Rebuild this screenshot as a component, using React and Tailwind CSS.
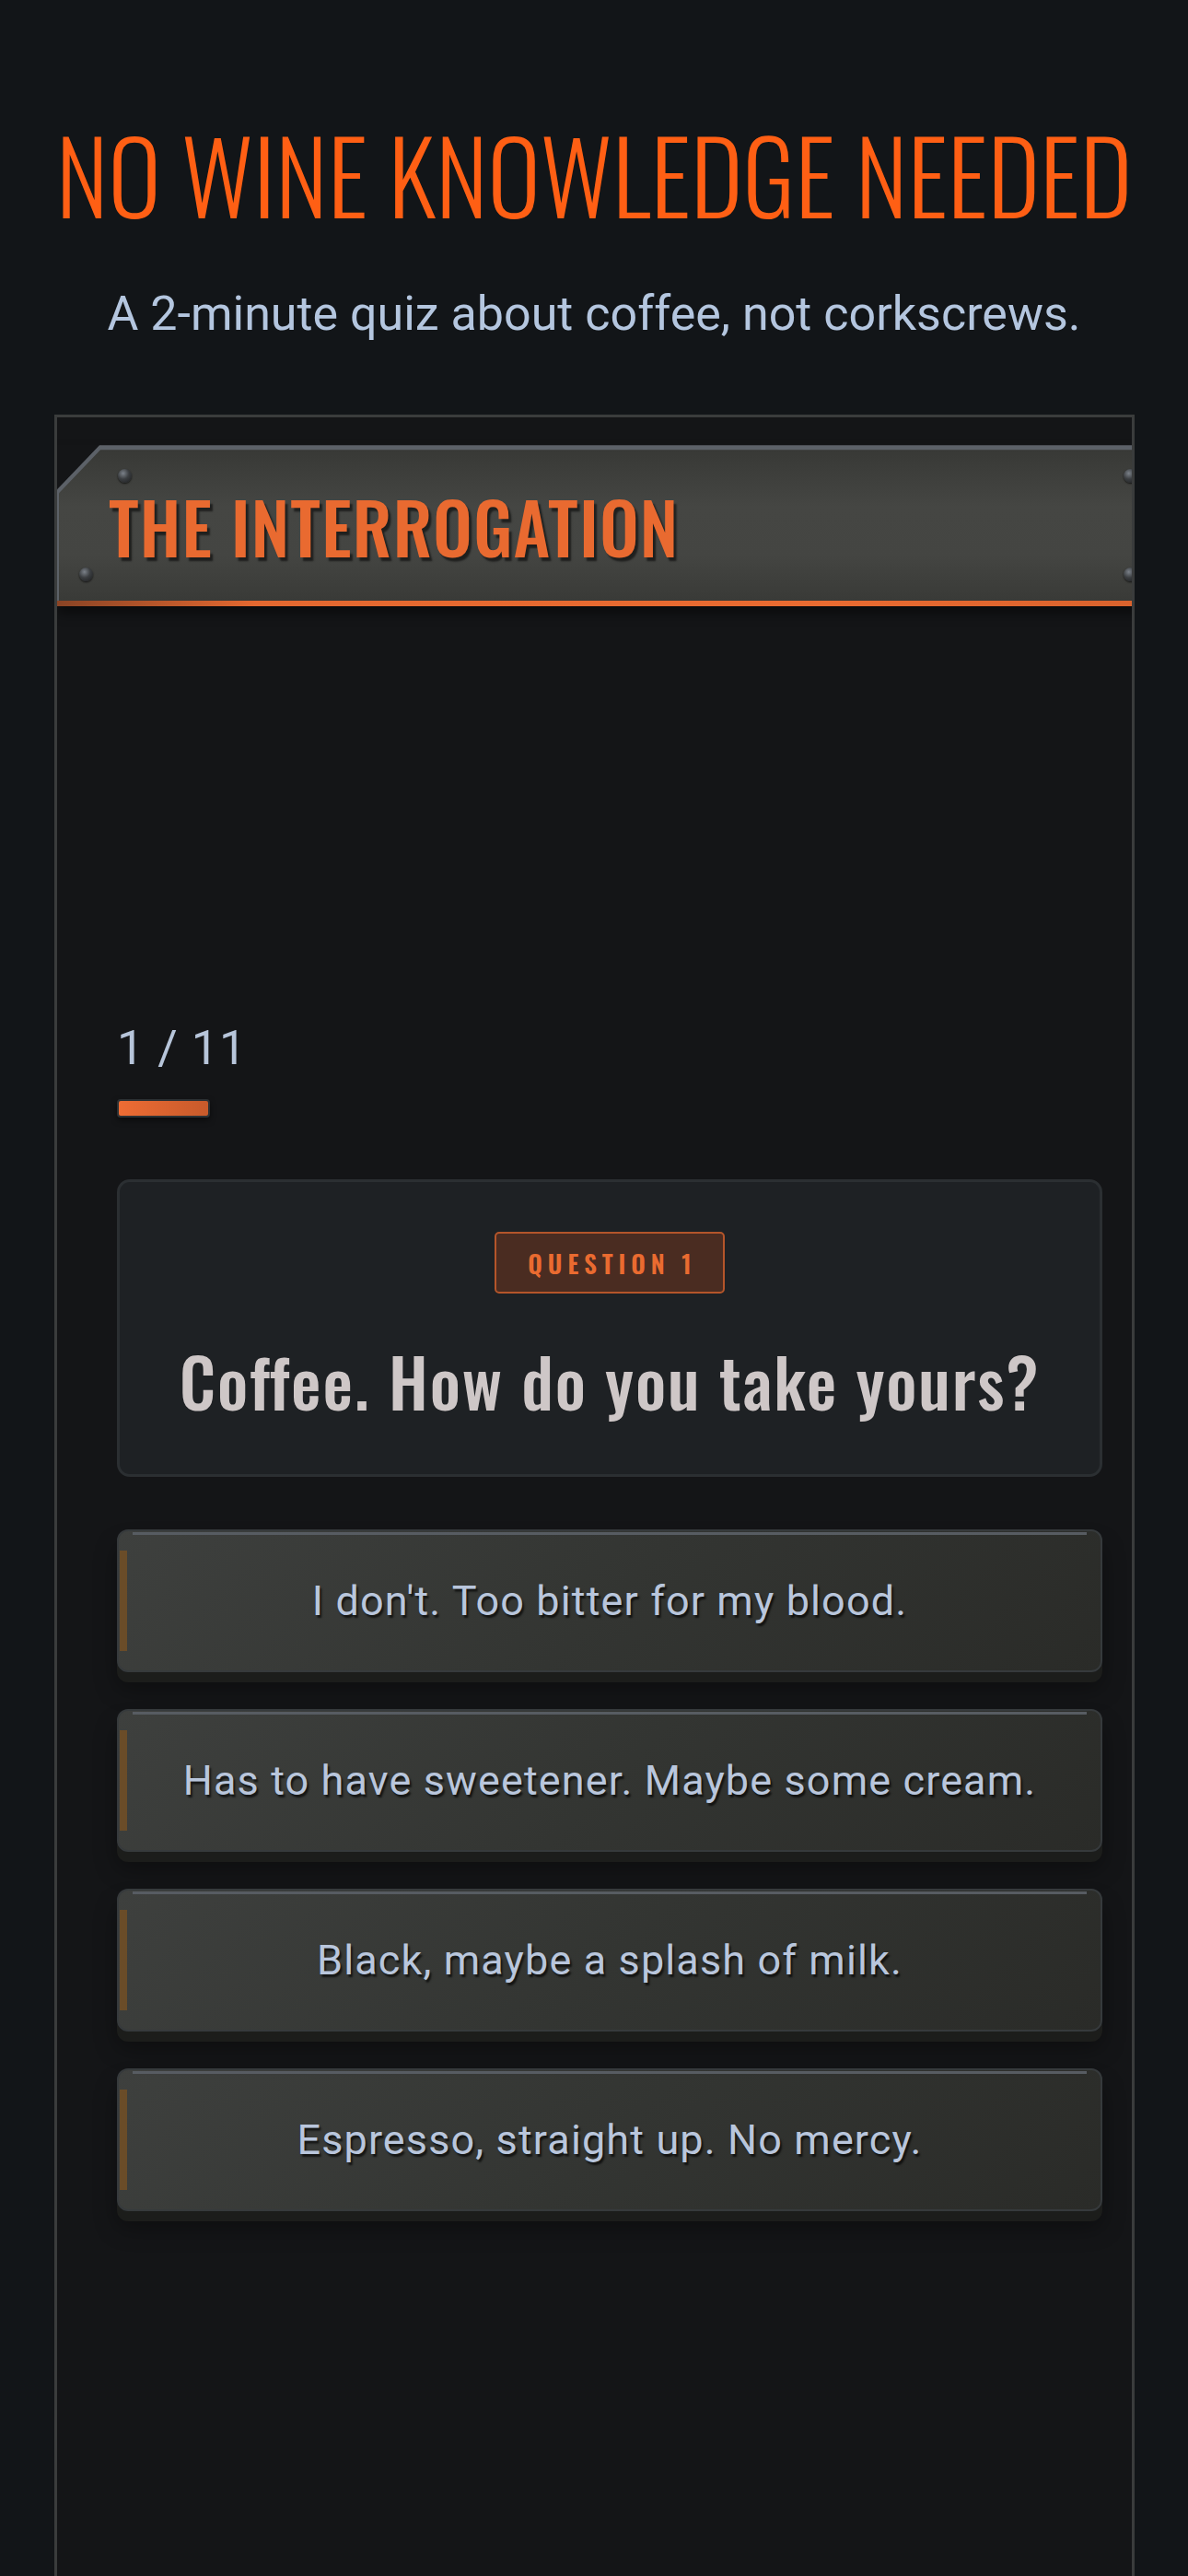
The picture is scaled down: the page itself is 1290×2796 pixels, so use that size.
import React from 'react';

const answers = [
  "I don't. Too bitter for my blood.",
  'Has to have sweetener. Maybe some cream.',
  'Black, maybe a splash of milk.',
  'Espresso, straight up. No mercy.',
];

function Rivet({ className }) {
  return (
    <span
      className={
        'absolute h-[15px] w-[15px] rounded-full bg-[radial-gradient(circle_at_38%_32%,#7b8189_0%,#3b3e41_45%,#1a1b1d_100%)] shadow-[0_1px_2px_rgba(0,0,0,0.7)] ' +
        className
      }
    />
  );
}

function Answer({ text }) {
  return (
    <button className="relative flex h-[155px] w-full items-center justify-center rounded-[12px] border-[2px] border-[#363a3c] bg-[linear-gradient(135deg,#3e403e_0%,#333532_50%,#2a2b28_100%)] shadow-[0_11px_0_#1c1d1b,0_18px_24px_rgba(0,0,0,0.35)]">
      <span className="absolute left-[15px] right-[15px] top-[1px] h-[3px] bg-[#575c62]" />
      <span className="absolute bottom-[21px] left-[1px] top-[21px] w-[8px] bg-[#6a4c28]" />
      <span className="font-['Roboto',sans-serif] text-[45px] tracking-[0.025em] text-[#b9c6dc] [text-shadow:2px_3px_2px_rgba(0,0,0,0.65)]">
        {text}
      </span>
    </button>
  );
}

export default function App() {
  return (
    <div className="flex h-[2796px] flex-col overflow-hidden bg-[#121518]">
      <h1 className="mt-[129px] whitespace-nowrap text-center font-['Oswald','Roboto_Condensed',sans-serif] text-[109px] font-light leading-[1.1] text-[#ff5f14]">
        NO WINE KNOWLEDGE NEEDED
      </h1>
      <p className="mt-[61px] text-center font-['Roboto',sans-serif] text-[52px] leading-[1.2] text-[#b4c6df]">
        A 2-minute quiz about coffee, not corkscrews.
      </p>

      <div className="ml-[59px] mt-[78px] w-[1173px] flex-1 overflow-hidden border-[3px] border-b-0 border-[#3a3c3c] bg-[#141517]">
        {/* header plate */}
        <div className="relative mt-[30px] w-[calc(100%+24px)] shadow-[0_8px_12px_rgba(0,0,0,0.45)]">
          <div className="bg-[#5c6168] pt-[5px] [clip-path:polygon(46px_0,100%_0,100%_100%,0_100%,0_48px)]">
            <div className="relative ml-[2px] flex h-[164px] items-center bg-[linear-gradient(180deg,#383936_0%,#454643_38%,#444542_70%,#393a37_100%)] pl-[54px] pt-[2px] [clip-path:polygon(45px_0,100%_0,100%_100%,0_100%,0_47px)]">
              <span className="font-['Oswald','Roboto_Condensed',sans-serif] text-[76px] font-medium leading-none tracking-[0.015em] text-[#e96a30] [text-shadow:3px_4px_2px_rgba(0,0,0,0.55)]">
                THE INTERROGATION
              </span>
              <Rivet className="left-[64px] top-[21px]" />
              <Rivet className="left-[22px] top-[128px]" />
              <Rivet className="right-[18px] top-[21px]" />
              <Rivet className="right-[18px] top-[128px]" />
            </div>
            <div className="h-[6px] bg-[linear-gradient(90deg,#8a4425_0%,#e46830_18%,#ea6b31_70%,#d9622d_100%)]" />
          </div>
        </div>

        <div className="pl-[65px] pr-[32px]">
          <div className="mt-[454px] font-['Roboto',sans-serif] text-[52px] leading-none tracking-[0.02em] text-[#b7c5da]">
            1 / 11
          </div>
          <div className="mt-[29px] h-[20px] w-[101px] rounded-[4px] border-[2px] border-[#2c3134] bg-[linear-gradient(90deg,#ee6c34,#c75a2b)] shadow-[0_3px_6px_rgba(0,0,0,0.5)]" />

          <div className="mt-[67px] flex h-[323px] flex-col items-center rounded-[14px] border-[3px] border-[#2b2f32] bg-[#1e2124] pt-[54px]">
            <div className="flex h-[67px] w-[250px] items-center justify-center whitespace-nowrap rounded-[5px] border-[2px] border-[#b4552a] bg-[#4a2c21] pl-[6px] font-['Oswald','Roboto_Condensed',sans-serif] text-[27px] font-semibold tracking-[0.22em] text-[#ea6b30]">
              QUESTION 1
            </div>
            <div className="mt-[58px] whitespace-nowrap font-['Oswald','Roboto_Condensed',sans-serif] text-[73px] font-medium leading-none tracking-[0.025em] text-[#cec7c7]">
              Coffee. How do you take yours?
            </div>
          </div>

          <div className="mt-[57px] flex flex-col gap-[40px]">
            {answers.map((a) => (
              <Answer key={a} text={a} />
            ))}
          </div>
        </div>
      </div>
    </div>
  );
}
